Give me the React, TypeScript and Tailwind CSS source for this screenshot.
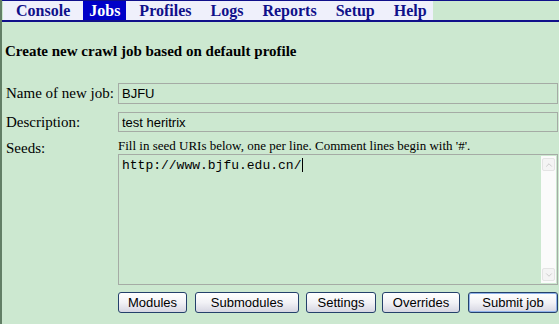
import { ChevronUp, ChevronDown } from 'lucide-react'
import clsx from 'clsx'

const tabs = ['Console', 'Jobs', 'Profiles', 'Logs', 'Reports', 'Setup', 'Help']

const buttons = [
  { label: 'Modules', w: 'w-[69px]', ml: 'ml-0' },
  { label: 'Submodules', w: 'w-[104px]', ml: 'ml-[8px]' },
  { label: 'Settings', w: 'w-[70px]', ml: 'ml-[7px]' },
  { label: 'Overrides', w: 'w-[78px]', ml: 'ml-[6px]' },
  { label: 'Submit job', w: 'w-[90px]', ml: 'ml-[8px]' },
]

const App = () => {
  return (
    <div className="w-[559px] h-[324px] overflow-hidden bg-[#cce8d0] border-l-2 border-[#627f66] font-['Liberation_Serif',serif] text-black">
      {/* top tabs */}
      <nav className="flex h-[22px] border-t border-b-2 border-[#10108a]">
        <div className="ml-[1px] flex gap-[7px] bg-[#eff0fb] pl-[7px]">
          {tabs.map((t) => (
            <a
              key={t}
              className={clsx(
                'px-[6px] text-[16px] font-bold leading-[19px] cursor-pointer',
                t === 'Jobs' ? 'bg-[#0000c8] text-white' : 'text-[#10108a]'
              )}
            >
              {t}
            </a>
          ))}
        </div>
      </nav>

      <h1 className="mt-[21px] pl-[3px] text-[15px] font-bold leading-[17px]">
        Create new crawl job based on default profile
      </h1>

      <div className="mt-[23px] grid grid-cols-[112px_1fr] pl-[4px] pr-[1px] text-[15px] leading-[17px]">
        {/* name */}
        <div className="flex items-center">Name of new job:</div>
        <input
          defaultValue="BJFU"
          className="h-[21px] border border-[#a5aba5] bg-transparent px-[3px] font-['Liberation_Sans',sans-serif] text-[13px] outline-none"
        />

        {/* description */}
        <div className="mt-[8px] flex items-center">Description:</div>
        <input
          defaultValue="test heritrix"
          className="mt-[8px] h-[20px] border border-[#a5aba5] bg-transparent px-[3px] font-['Liberation_Sans',sans-serif] text-[13px] outline-none"
        />

        {/* seeds */}
        <div className="mt-[7px] pt-[1px]">Seeds:</div>
        <div className="mt-[6px]">
          <p className="text-[13px] leading-[15px]">
            Fill in seed URIs below, one per line. Comment lines begin with '#'.
          </p>
          <div className="mt-[1px] flex h-[131px] border border-[#a5aba5]">
            <div className="flex-1 px-[3px] pt-[3px] font-['Liberation_Mono',monospace] text-[13px] leading-[15px]">
              http://www.bjfu.edu.cn/
              <span className="ml-[1px] inline-block h-[14px] w-px bg-black align-[-3px]" />
            </div>
            <div className="my-[1px] mr-[1px] flex w-[15px] flex-col justify-between bg-[#fbfbfb] py-[2px]">
              <div className="mx-[1px] flex h-[13px] items-center justify-center rounded-[2px] border border-[#e4e4e4] bg-[#f4f4f4]">
                <ChevronUp size={10} strokeWidth={2} className="text-[#c4c4c4]" />
              </div>
              <div className="mx-[1px] flex h-[13px] items-center justify-center rounded-[2px] border border-[#e4e4e4] bg-[#f4f4f4]">
                <ChevronDown size={10} strokeWidth={2} className="text-[#c4c4c4]" />
              </div>
            </div>
          </div>

          <div className="mt-[7px] flex">
            {buttons.map((b) => (
              <button
                key={b.label}
                className={clsx(
                  'h-[21px] rounded-[3px] border border-[#24406b] bg-gradient-to-b from-white via-[#f2f2f6] to-[#d6d6e2] font-[\'Liberation_Sans\',sans-serif] text-[13px] leading-[19px]',
                  b.w,
                  b.ml,
                  b.label === 'Submit job' && 'shadow-[inset_0_0_0_1px_#8fb2ea]'
                )}
              >
                {b.label}
              </button>
            ))}
          </div>
        </div>
      </div>
    </div>
  )
}

export default App
